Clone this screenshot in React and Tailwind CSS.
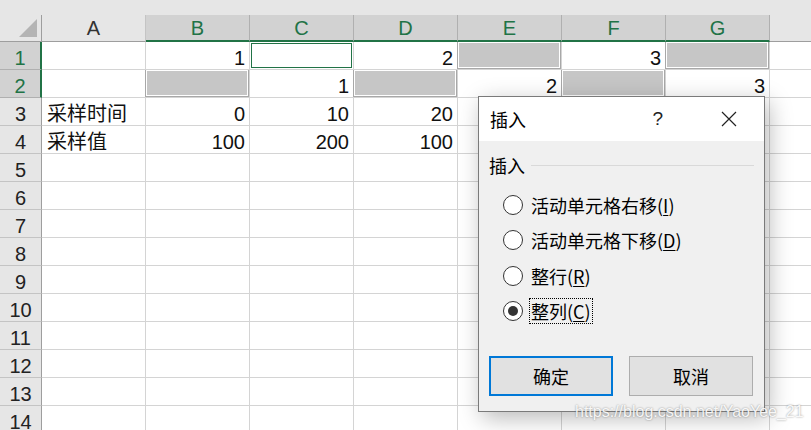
import React from 'react';

const cols = ['A', 'B', 'C', 'D', 'E', 'F', 'G'];

// g = 灰色选中块, act = 活动单元格
const rows = [
  ['', '1', 'act', '2', 'g', '3', 'g'],
  ['', 'g', '1', 'g', '2', 'g', '3'],
  ['采样时间', '0', '10', '20', '30', '40', '50'],
  ['采样值', '100', '200', '100', '300', '100', '200'],
];

const Cell = ({ value, col }) => {
  if (value === 'g') {
    return (
      <div className="border-r border-b border-[#d4d4d4] relative">
        <div className="absolute -left-px -top-px right-0 bottom-0 border border-[#a8a8a8]">
          <div className="h-full border border-white bg-[#c6c6c6]" />
        </div>
      </div>
    );
  }
  if (value === 'act') {
    return (
      <div className="border-r border-b border-[#d4d4d4] p-px">
        <div className="h-full border border-[#217346]" />
      </div>
    );
  }
  const isText = col === 0;
  return (
    <div
      className={`border-r border-b border-[#d4d4d4] flex pt-[6px] leading-[21px] overflow-hidden whitespace-nowrap ${
        isText ? 'justify-start pl-[5px]' : 'justify-end pr-[4px]'
      }`}
    >
      {value}
    </div>
  );
};

const Radio = ({ checked, label, hot }) => (
  <div className="flex items-center h-[35.5px]">
    <span className="w-[20px] h-[20px] ml-[24px] rounded-full border border-[#333] bg-white flex items-center justify-center">
      {checked && <span className="w-[10px] h-[10px] rounded-full bg-[#333]" />}
    </span>
    <span
      className={`ml-[6px] px-px leading-[24px] border border-dotted ${
        checked ? 'border-black' : 'border-transparent'
      }`}
    >
      {label}(<span className="underline underline-offset-2">{hot}</span>)
    </span>
  </div>
);

export default function App() {
  return (
    <div className="relative w-[811px] h-[430px] overflow-hidden bg-white text-[#111] font-['Liberation_Sans','Noto_Sans_CJK_SC',sans-serif]">
      <div className="h-[15px] bg-[#e6e6e6]" />

      {/* 列标题 */}
      <div className="grid grid-cols-[42px_repeat(7,104px)_1fr] grid-rows-[27px] h-[27px] bg-[#e6e6e6] text-[20px] leading-[24px]">
        <div className="relative border-r border-b border-[#9e9e9e]">
          <svg className="absolute right-[4px] bottom-[4px]" width="18" height="18" viewBox="0 0 18 18">
            <polygon points="18,0 18,18 0,18" fill="#b4b4b4" />
          </svg>
        </div>
        {cols.map((c, i) => (
          <div
            key={c}
            className={`flex items-center justify-center border-r ${
              i === 0
                ? 'border-[#c4c4c4] border-b border-b-[#9e9e9e] text-[#333]'
                : 'bg-[#d2d2d2] border-[#b0b0b0] border-b-2 border-b-[#217346] text-[#217346]'
            }`}
          >
            {c}
          </div>
        ))}
        <div className="border-b border-[#9e9e9e]" />
      </div>

      {/* 行 */}
      <div className="text-[20px]">
        {Array.from({ length: 14 }).map((_, r) => {
          const data = rows[r] || [];
          const sel = r < 2;
          return (
            <div key={r} className="grid grid-cols-[42px_repeat(7,104px)_1fr] grid-rows-[28px] h-[28px] overflow-hidden">
              <div
                className={`flex justify-center pt-[6px] leading-[21px] border-b ${
                  sel
                    ? 'bg-[#d2d2d2] text-[#217346] border-[#b0b0b0] border-r-2 border-r-[#217346]'
                    : 'bg-[#e6e6e6] text-[#222] border-[#c4c4c4] border-r border-r-[#9e9e9e]'
                }`}
              >
                {r + 1}
              </div>
              {cols.map((c, i) => (
                <Cell key={c} col={i} value={data[i] || ''} />
              ))}
              <div className="border-b border-[#d4d4d4]" />
            </div>
          );
        })}
      </div>

      {/* 插入 对话框 */}
      <div className="absolute left-[478px] top-[96px] w-[287px] h-[316px] border border-[#7a7a7a] bg-[#f0f0f0] shadow-[4px_6px_22px_rgba(0,0,0,0.28)] text-[18px] text-black font-['Noto_Sans_CJK_SC','Liberation_Sans',sans-serif] flex flex-col">
        <div className="h-[44px] bg-white flex items-center pl-[11px]">
          <span className="flex-1">插入</span>
          <span className="font-['Liberation_Sans',sans-serif] text-[19px] leading-[20px] text-[#222] mr-[58px]">?</span>
          <svg className="mr-[27px]" width="16" height="16" viewBox="0 0 16 16">
            <path d="M1 1 L15 15 M15 1 L1 15" stroke="#222" strokeWidth="1.2" />
          </svg>
        </div>
        <div className="flex items-center mt-[11px] pl-[10px] pr-[10px] h-[26px]">
          <span>插入</span>
          <span className="flex-1 ml-[6px] h-px bg-[#d9d9d9]" />
        </div>
        <div className="mt-[9px]">
          <Radio label="活动单元格右移" hot="I" />
          <Radio label="活动单元格下移" hot="D" />
          <Radio label="整行" hot="R" />
          <Radio label="整列" hot="C" checked />
        </div>
        <div className="flex gap-[16px] pl-[10px] mt-[27px]">
          <button className="w-[124px] h-[40px] border-2 border-[#0078d7] bg-[#e1e1e1]">确定</button>
          <button className="w-[124px] h-[40px] border border-[#adadad] bg-[#e1e1e1]">取消</button>
        </div>
      </div>

      {/* 水印 */}
      <div className="absolute left-[575px] top-[402px] text-[16px] leading-[20px] text-white/90 font-['Liberation_Sans',sans-serif] [text-shadow:0_0_2px_rgba(0,0,0,0.45)]">
        https://blog.csdn.net/YaoYee_21
      </div>
    </div>
  );
}
